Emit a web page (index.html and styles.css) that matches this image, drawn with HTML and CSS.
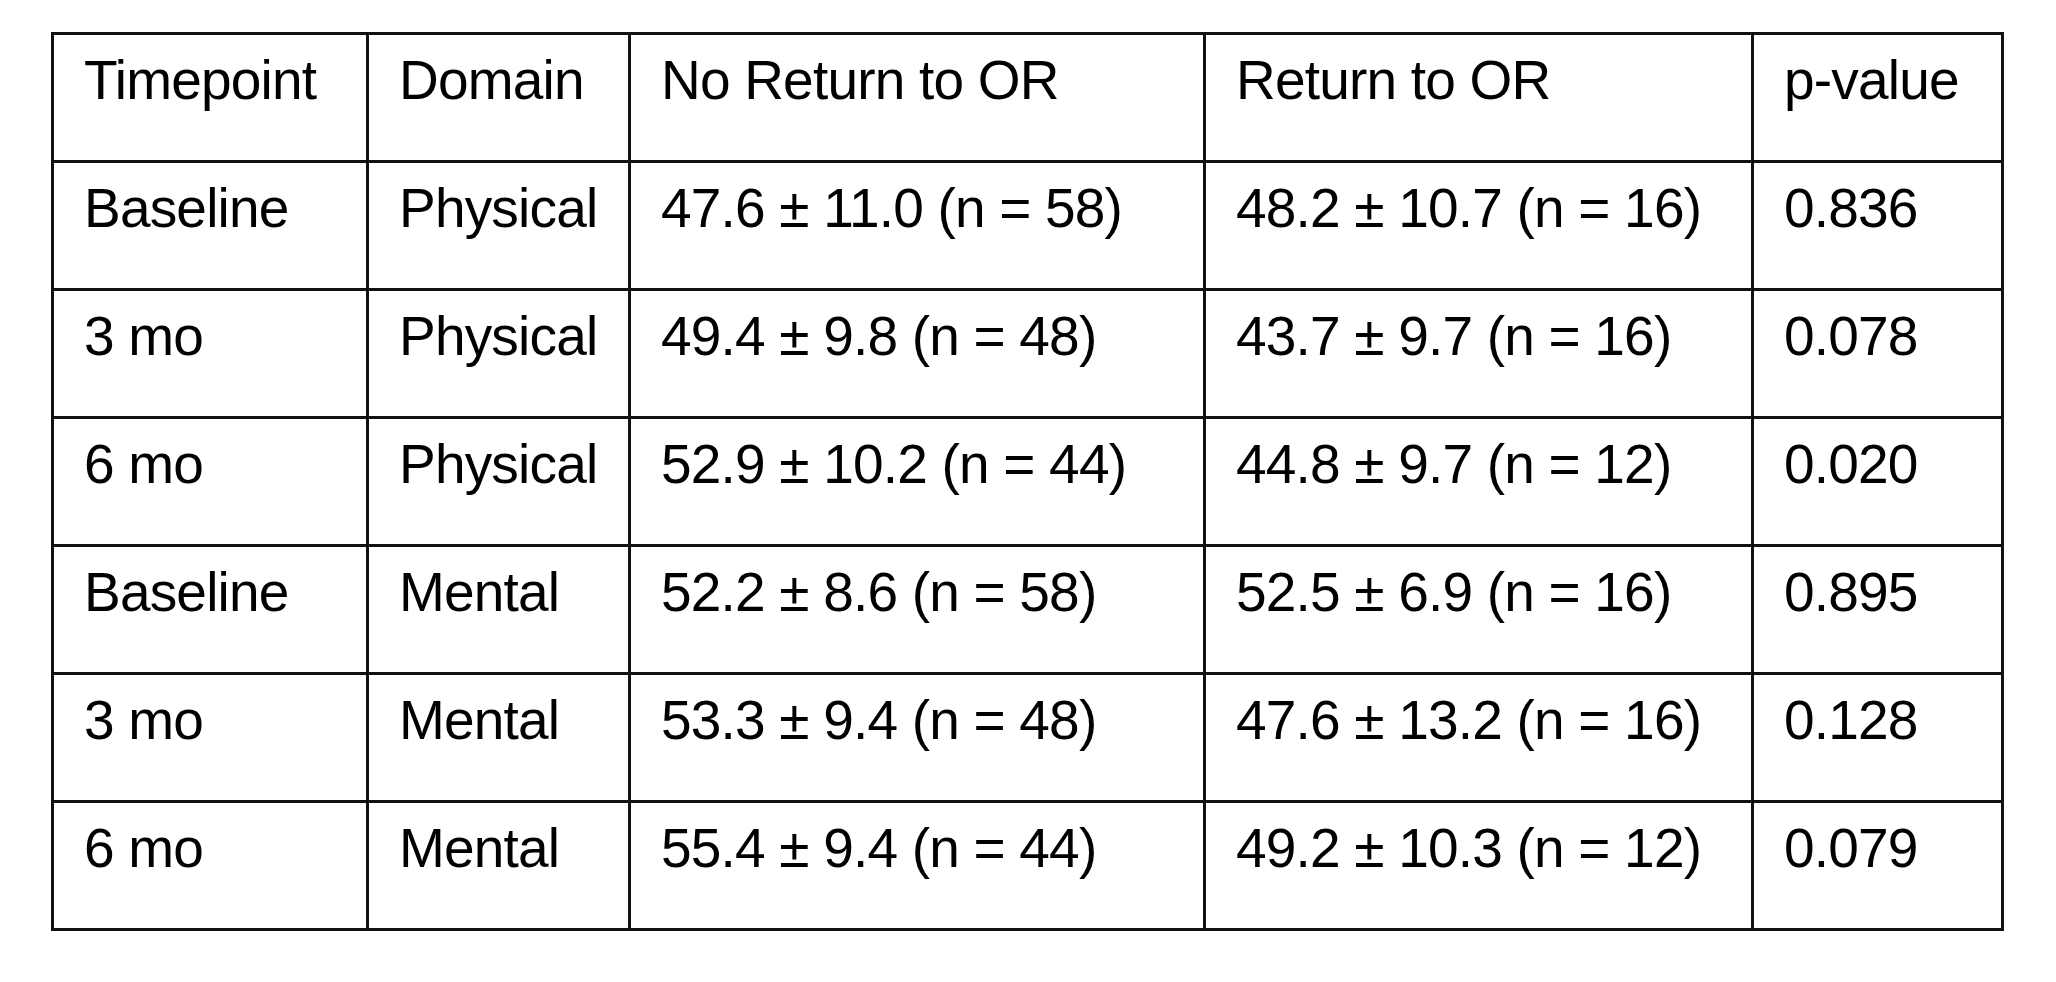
FILE: index.html
```html
<html lang="en">
<head>
  <meta charset="UTF-8" />
  <title>Return to OR – PROMIS scores</title>
  <link rel="stylesheet" href="styles.css">
</head>
<body>
  <table class="results">
    <colgroup>
      <col class="c-time"><col class="c-domain"><col class="c-noret"><col class="c-ret"><col class="c-p">
    </colgroup>
    <tr><td>Timepoint</td><td>Domain</td><td>No Return to OR</td><td>Return to OR</td><td>p-value</td></tr>
    <tr><td>Baseline</td><td>Physical</td><td>47.6 ± 11.0 (n = 58)</td><td>48.2 ± 10.7 (n = 16)</td><td>0.836</td></tr>
    <tr><td>3 mo</td><td>Physical</td><td>49.4 ± 9.8 (n = 48)</td><td>43.7 ± 9.7 (n = 16)</td><td>0.078</td></tr>
    <tr><td>6 mo</td><td>Physical</td><td>52.9 ± 10.2 (n = 44)</td><td>44.8 ± 9.7 (n = 12)</td><td>0.020</td></tr>
    <tr><td>Baseline</td><td>Mental</td><td>52.2 ± 8.6 (n = 58)</td><td>52.5 ± 6.9 (n = 16)</td><td>0.895</td></tr>
    <tr><td>3 mo</td><td>Mental</td><td>53.3 ± 9.4 (n = 48)</td><td>47.6 ± 13.2 (n = 16)</td><td>0.128</td></tr>
    <tr><td>6 mo</td><td>Mental</td><td>55.4 ± 9.4 (n = 44)</td><td>49.2 ± 10.3 (n = 12)</td><td>0.079</td></tr>
  </table>
</body>
</html>
```

FILE: styles.css
```css
body { margin:0; background:#fff; font-family:"Liberation Sans", Arial, sans-serif; color:#000; }
.results {
  border-collapse:collapse;
  table-layout:fixed;
  width:1950px;
  margin:32px 0 0 51px;
}
.c-time { width:315px; }
.c-domain { width:262px; }
.c-noret { width:575px; }
.c-ret { width:548px; }
.c-p { width:250px; }
.results tr { height:128px; }
.results td {
  border:3px solid #111;
  vertical-align:top;
  padding:13px 8px 0 30px;
  font-size:55px;
  letter-spacing:-0.8px;
  white-space:nowrap;
}
```
